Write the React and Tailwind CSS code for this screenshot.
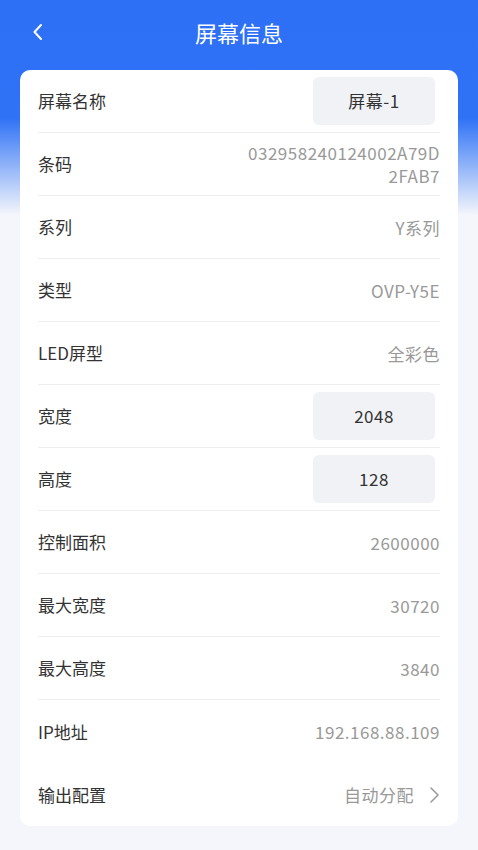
import React from 'react';

const rows = [
  { label: '屏幕名称', input: '屏幕-1' },
  { label: '条码', value: ['032958240124002A79D', '2FAB7'] },
  { label: '系列', value: 'Y系列' },
  { label: '类型', value: 'OVP-Y5E' },
  { label: 'LED屏型', value: '全彩色' },
  { label: '宽度', input: '2048' },
  { label: '高度', input: '128' },
  { label: '控制面积', value: '2600000' },
  { label: '最大宽度', value: '30720' },
  { label: '最大高度', value: '3840' },
  { label: 'IP地址', value: '192.168.88.109', noLine: true },
  { label: '输出配置', value: '自动分配', arrow: true, noLine: true },
];

function Row({ row }) {
  return (
    <div
      className={`flex h-[63px] items-center justify-between ${
        row.noLine ? '' : 'border-b border-[#eceef2]'
      }`}
    >
      <span className="text-[17px] text-[#333]">{row.label}</span>
      {row.input && (
        <div className="mr-[5px] flex h-[48px] w-[122px] items-center justify-center rounded-[6px] bg-[#f1f2f6] text-[17px] tracking-[0.5px] text-[#333]">
          {row.input}
        </div>
      )}
      {row.value && (
        <div className="flex items-center text-right text-[17px] leading-[23px] tracking-[0.5px] text-[#999]">
          {Array.isArray(row.value) ? (
            <div>
              {row.value.map((v) => (
                <div key={v}>{v}</div>
              ))}
            </div>
          ) : (
            <span>{row.value}</span>
          )}
          {row.arrow && (
            <svg width="12" height="18" viewBox="0 0 12 18" className="ml-[14px]" fill="none">
              <path d="M3 2l7 7-7 7" stroke="#999" strokeWidth="1.5" strokeLinecap="round" strokeLinejoin="round" />
            </svg>
          )}
        </div>
      )}
    </div>
  );
}

export default function App() {
  return (
    <div
      className="min-h-[850px] bg-[#f5f6fa] bg-[linear-gradient(180deg,#2d70f6_0px,#2f72f6_118px,#f4f6fb_215px)] bg-no-repeat"
      style={{ fontFamily: '"Noto Sans CJK SC", "Noto Sans", sans-serif' }}
    >
      <div className="relative flex h-[64px] items-center justify-center">
        <button className="absolute left-[28px] top-[22px] flex h-[20px] w-[20px] items-center justify-center">
          <svg width="12" height="18" viewBox="0 0 12 18" fill="none">
            <path d="M9 2L2.5 9 9 16" stroke="#fff" strokeWidth="2" strokeLinecap="round" strokeLinejoin="round" />
          </svg>
        </button>
        <h1 className="text-[22px] text-white">屏幕信息</h1>
      </div>
      <div className="mx-[20px] mt-[6px] rounded-[10px] bg-white px-[18px]">
        {rows.map((r) => (
          <Row key={r.label} row={r} />
        ))}
      </div>
    </div>
  );
}
